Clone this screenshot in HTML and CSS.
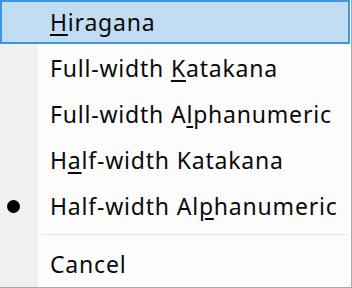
FILE: index.html
```html
<!DOCTYPE html>
<html lang="en">
<head>
  <meta charset="UTF-8">
  <title>IME mode menu</title>
  <link rel="stylesheet" href="styles.css">
</head>
<body>

  <div class="menu">
    <div class="item active">
      <span class="check"></span>
      <span class="label"><u>H</u>iragana</span>
    </div>
    <div class="item">
      <span class="check"></span>
      <span class="label">Full-width <u>K</u>atakana</span>
    </div>
    <div class="item">
      <span class="check"></span>
      <span class="label">Full-width A<u>l</u>phanumeric</span>
    </div>
    <div class="item">
      <span class="check"></span>
      <span class="label">H<u>a</u>lf-width Katakana</span>
    </div>
    <div class="item">
      <span class="check"><span class="dot"></span></span>
      <span class="label">Half-width Al<u>p</u>hanumeric</span>
    </div>

    <div class="separator"></div>

    <div class="item">
      <span class="check"></span>
      <span class="label">Cancel</span>
    </div>
  </div>

</body>
</html>
```

FILE: styles.css
```css
:root {
  --menu-bg: #fcfcfc;
  --gutter-bg: #f0f0f0;
  --edge: #a8a8a8;
  --hover-bg: #c1dcf3;
  --hover-border: #3d96e3;
}

html, body {
  margin: 0;
  padding: 0;
  background: var(--menu-bg);
}

.menu {
  width: 351px;
  height: 287px;
  border-right: 1px solid var(--edge);
  border-bottom: 1px solid var(--edge);
  background: linear-gradient(to right, var(--gutter-bg) 38px, var(--menu-bg) 38px);
  font-family: "Noto Sans", "DejaVu Sans", sans-serif;
  font-size: 23px;
  letter-spacing: 0.8px;
  color: #0a0a0a;
  overflow: hidden;
}

.item {
  display: flex;
  align-items: center;
  height: 44px;
  margin: 0 1px 2px 0;
  box-sizing: border-box;
  border: 1px solid transparent;
}

.item.active {
  background-color: var(--hover-bg);
  border: 2px solid var(--hover-border);
}

.check {
  flex: 0 0 49px;
  display: flex;
  align-items: center;
  padding-left: 6px;
  box-sizing: border-box;
}

.item.active .check {
  flex-basis: 48px;
}

.dot {
  width: 13px;
  height: 13px;
  border-radius: 50%;
  background: #000;
}

.label {
  white-space: nowrap;
}

.label u {
  text-underline-offset: 3px;
}

.separator {
  height: 12px;
  margin-left: 42px;
  margin-right: 3px;
  background: linear-gradient(#fcfcfc 4px, #e6e6e6 4px, #e6e6e6 5px, #fcfcfc 5px);
}
```
